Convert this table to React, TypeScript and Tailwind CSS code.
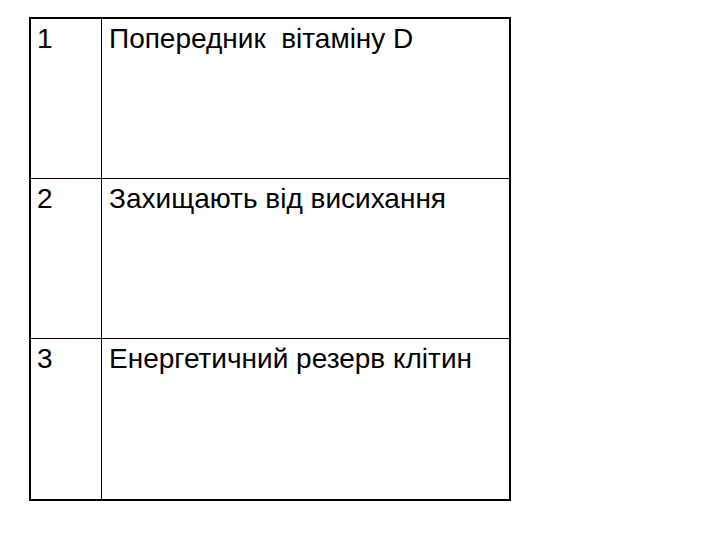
const rows = [
  { n: "1", text: "Попередник  вітаміну D" },
  { n: "2", text: "Захищають від висихання" },
  { n: "3", text: "Енергетичний резерв клітин" },
];

export default function App() {
  return (
    <div className="w-[720px] h-[540px] bg-white pt-[17px] pl-[29px] font-['Liberation_Sans',Arial,sans-serif] text-black">
      <div className="w-[482px] border-2 border-black flex flex-col">
        {rows.map((r, i) => (
          <div
            key={r.n}
            className={"flex h-[160px] " + (i < rows.length - 1 ? "border-b border-black" : "")}
          >
            <div className="w-[71px] border-r border-black pl-[6px] pt-[4px] text-[28px] leading-[32px]">
              {r.n}
            </div>
            <div className="flex-1 pl-[7px] pt-[4px] text-[28px] leading-[32px] whitespace-pre">
              {r.text}
            </div>
          </div>
        ))}
      </div>
    </div>
  );
}
